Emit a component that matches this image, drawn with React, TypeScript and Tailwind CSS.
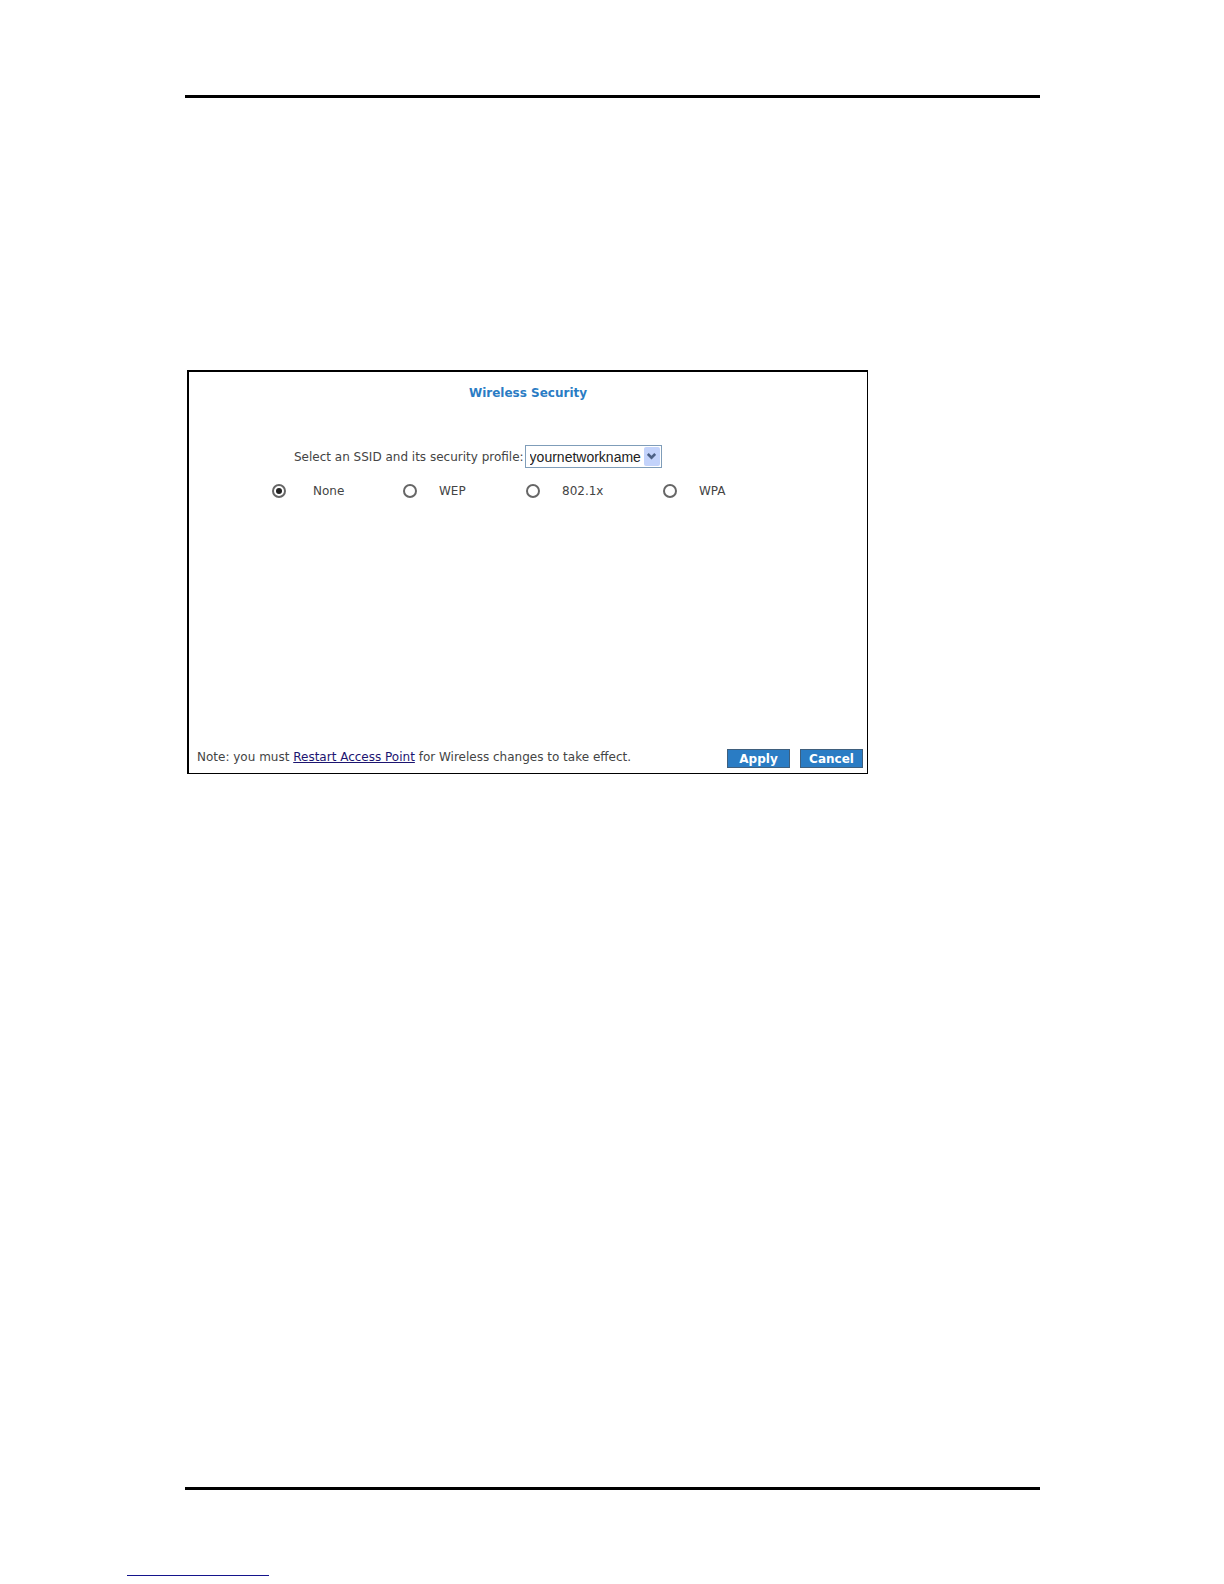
import { useState } from 'react'
import type { FormEvent } from 'react'

type Profile = 'none' | 'wep' | '8021x' | 'wpa'

const profiles: { id: Profile; label: string; cell: string; gap: string }[] = [
  { id: 'none', label: 'None', cell: 'w-[131px]', gap: 'gap-[27px]' },
  { id: 'wep', label: 'WEP', cell: 'w-[123px]', gap: 'gap-[22px]' },
  { id: '8021x', label: '802.1x', cell: 'w-[137px]', gap: 'gap-[22px]' },
  { id: 'wpa', label: 'WPA', cell: '', gap: 'gap-[22px]' },
]

const buttonClass =
  'h-[19px] w-[63px] border border-[#3f5f7d] bg-[#2a7cc4] text-xs leading-4 font-bold text-white'

function SecurityPanel() {
  const [ssid, setSsid] = useState('yournetworkname')
  const [profile, setProfile] = useState<Profile>('none')

  const handleSubmit = (e: FormEvent) => e.preventDefault()

  return (
    <form
      onSubmit={handleSubmit}
      className="flex min-h-[404px] w-[681px] max-w-full flex-col border-t-2 border-r border-b border-l-2 border-black text-[#444]"
    >
      <h1 className="mt-[13px] text-center text-xs leading-4 font-bold text-[#2a7cc4]">
        Wireless Security
      </h1>

      <div className="mt-11 ml-[105px] flex items-center gap-px">
        <label htmlFor="ssid">Select an SSID and its security profile:</label>
        <div className="relative">
          <select
            id="ssid"
            value={ssid}
            onChange={(e) => setSsid(e.target.value)}
            className="block h-[23px] w-[137px] appearance-none border border-[#7f9db9] bg-white pl-1 font-['Liberation_Sans',Arial,sans-serif] text-sm leading-5 text-[#222]"
          >
            <option>yournetworkname</option>
          </select>
          <span className="pointer-events-none absolute top-0.5 right-0.5 flex h-[19px] w-4 items-center justify-center rounded-xs bg-[#c3d3fb]">
            <svg viewBox="0 0 9 7" className="h-[7px] w-[9px]" fill="none" aria-hidden="true">
              <path d="M.8 1 4.5 4.7 8.2 1" stroke="#4d6185" strokeWidth="2.6" />
            </svg>
          </span>
        </div>
      </div>

      {/* Security profiles */}
      <div role="radiogroup" aria-label="Security profile" className="mt-[15px] ml-[83px] flex">
        {profiles.map((p) => (
          <label key={p.id} className={`flex items-center ${p.cell} ${p.gap}`}>
            <input
              type="radio"
              name="profile"
              checked={profile === p.id}
              onChange={() => setProfile(p.id)}
              className="flex size-3.5 appearance-none items-center justify-center rounded-full border-2 border-[#666] bg-white checked:before:size-1.5 checked:before:rounded-full checked:before:bg-[#222] checked:before:content-['']"
            />
            {p.label}
          </label>
        ))}
      </div>

      <div className="mt-auto flex items-start justify-between pr-1 pb-[5px] pl-2">
        <p>
          Note: you must{' '}
          <a href="#restart" className="text-[#1c1470] underline">
            Restart Access Point
          </a>{' '}
          for Wireless changes to take effect.
        </p>
        <div className="flex gap-2.5">
          <button type="submit" className={buttonClass}>
            Apply
          </button>
          <button type="button" onClick={() => setProfile('none')} className={buttonClass}>
            Cancel
          </button>
        </div>
      </div>
    </form>
  )
}

export default function App() {
  return (
    <div className="flex min-h-screen flex-col bg-white pt-[95px] font-['DejaVu_Sans',Verdana,sans-serif] text-xs leading-4">
      <hr className="mr-[184px] ml-[185px] border-t-3 border-black" />

      <main className="mt-[272px] mr-[184px] ml-[187px]">
        <SecurityPanel />
      </main>

      <footer className="mt-auto pb-2">
        <hr className="mr-[184px] ml-[185px] border-t-3 border-black" />
        <hr className="mt-[85px] ml-[127px] h-px w-[142px] border-0 bg-[#14148c]" />
      </footer>
    </div>
  )
}
